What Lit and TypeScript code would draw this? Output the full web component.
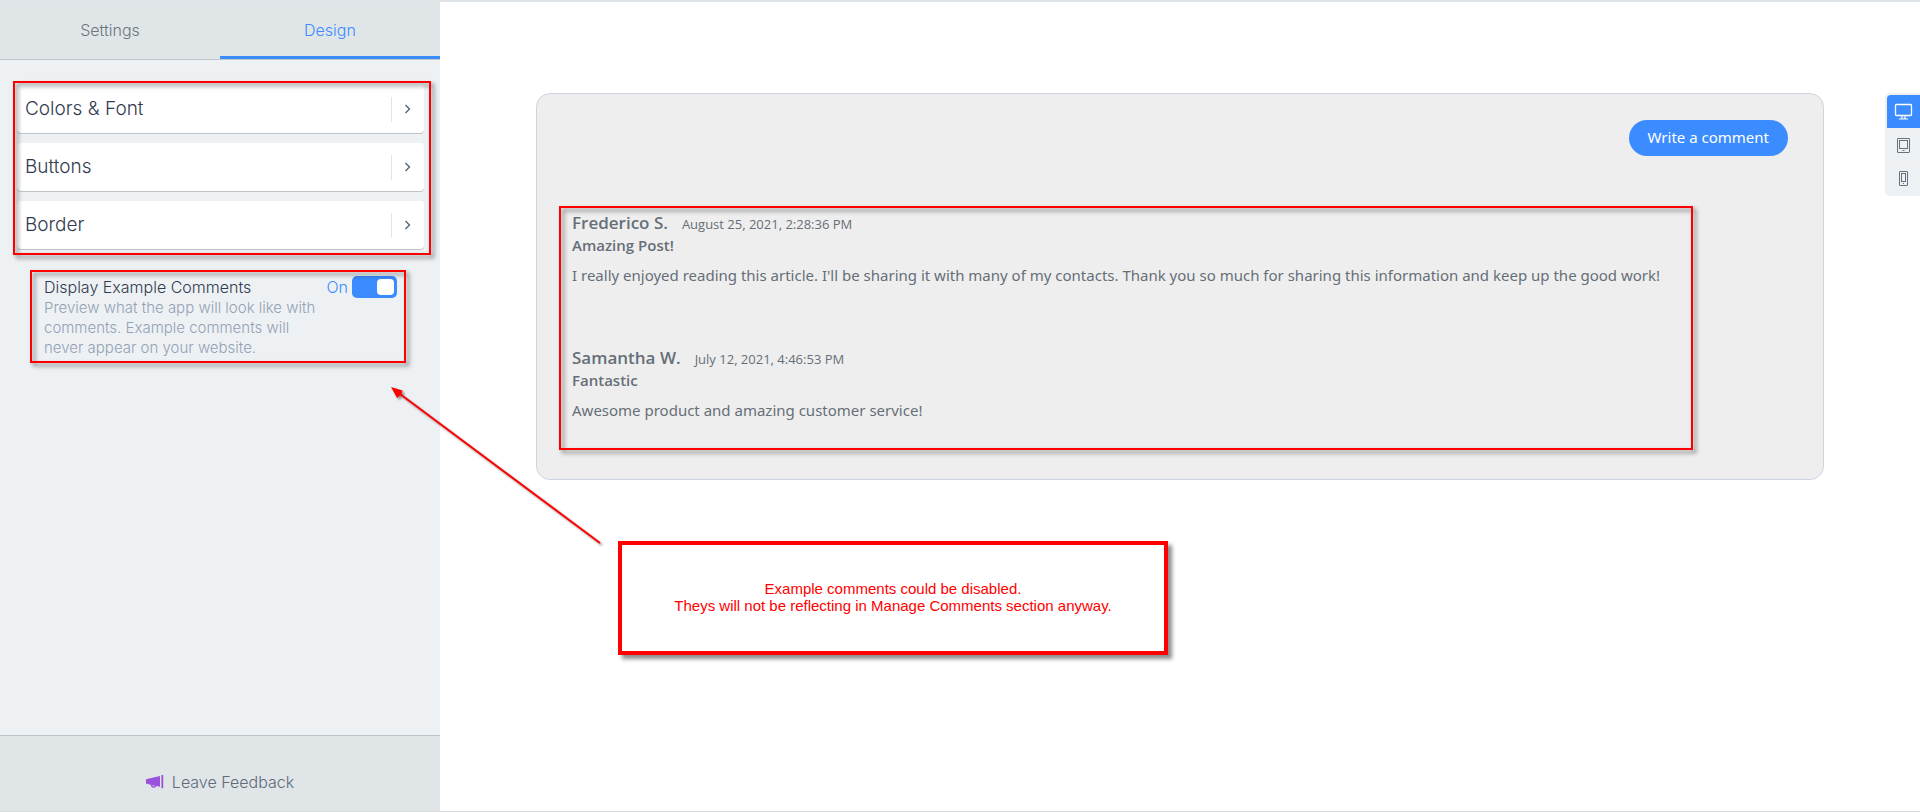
import { LitElement, html, css, svg } from "lit";
import { customElement, state } from "lit/decorators.js";

const chevron = html`<svg width="8" height="10" viewBox="0 0 8 10" fill="none" stroke="#4c6178" stroke-width="1.3" aria-hidden="true"><path d="M1.500 1l4 4-4 4" /></svg>`;

const megaphone = html`<svg width="18" height="14" viewBox="0 0 18 14" fill="#9a52dd" aria-hidden="true">
  <path d="M0 4.2L14 1v10.8L10.6 11a3.1 3.1 0 0 1-5.9-1.3L0 8.6z" />
  <path d="M6.3 10.1l2.6.6a1.4 1.4 0 0 1-2.6-.6z" fill="#e0e5e8" />
  <path d="M15.4 0H17.2v13.2h-1.800z" />
</svg>`;

const deviceIcons = {
  Desktop: svg`<rect x="1.500" y="1.500" width="16" height="11" rx="1" stroke-width="1.300"/><path d="M8 13v2.500M11 13v2.500M5 16h9" stroke-width="1.200"/>`,
  Tablet: svg`<rect x="3.500" y="2.500" width="12" height="14" rx=".5"/><rect x="5.500" y="4.500" width="8" height="8"/><path d="M8.500 14.500h2"/>`,
  Mobile: svg`<rect x="5.500" y="2.500" width="8" height="14" rx=".5"/><rect x="7.500" y="4.500" width="4" height="8"/><path d="M9 14.500h1"/>`,
};
type Device = keyof typeof deviceIcons;

const comments = [
  {
    author: "Frederico S.",
    date: "August 25, 2021, 2:28:36 PM",
    title: "Amazing Post!",
    text: "I really enjoyed reading this article. I'll be sharing it with many of my contacts. Thank you so much for sharing this information and keep up the good work!",
  },
  {
    author: "Samantha W.",
    date: "July 12, 2021, 4:46:53 PM",
    title: "Fantastic",
    text: "Awesome product and amazing customer service!",
  },
];

@customElement("app-root")
export class AppRoot extends LitElement {
  @state() private device: Device = "Desktop";
  @state() private examples = true;

  static styles = css`
    :host {
      display: flex;
      position: relative;
      box-sizing: border-box;
      min-height: 100vh;
      border-top: 2px solid #dfe5e9;
      border-bottom: 1px solid #dadddf;
      background: #fff;
      font-family: Inter, "Liberation Sans", sans-serif;
      font-weight: 300;
      font-size: 16px;
    }
    * {
      box-sizing: border-box;
    }
    button {
      font: inherit;
      border: 0;
      padding: 0;
      background: none;
      cursor: pointer;
    }
    p, h3, h4, ul {
      margin: 0;
      padding: 0;
    }
    .sidebar {
      flex: none;
      width: 440px;
      display: flex;
      flex-direction: column;
      background: #edf1f4;
    }
    .tabs {
      display: grid;
      grid-template-columns: 1fr 1fr;
      height: 58px;
      background: #e0e5e8;
      border-bottom: 1px solid #bfc5c9;
    }
    .tab {
      padding-top: 2px;
      color: #6c7680;
      border-bottom: 3px solid transparent;
    }
    .tab.active {
      color: #3b8cff;
      border-color: #3b8cff;
    }
    .marked {
      position: relative;
    }
    .marked::after {
      content: "";
      position: absolute;
      inset: 0;
      border: 2px solid #f00;
      filter: drop-shadow(3px 3px 2px rgba(0, 0, 0, 0.5));
      pointer-events: none;
    }
    .sections {
      display: flex;
      flex-direction: column;
      gap: 10px;
      margin: 21px 9px 0 13px;
      padding: 4px 7px 6px 4px;
    }
    .section {
      display: flex;
      align-items: center;
      height: 48px;
      padding-left: 8px;
      border-radius: 4px;
      background: #fff;
      box-shadow: 0 1px 0 #bcc4c8;
      color: #323a50;
      font-size: 19px;
      text-align: left;
    }
    .section-name {
      flex: 1;
      padding-bottom: 2px;
    }
    .section-go {
      display: flex;
      align-items: center;
      justify-content: center;
      width: 33px;
      height: 25px;
      border-left: 1px solid #dfe5eb;
    }
    .example {
      display: grid;
      grid-template-columns: 1fr auto;
      margin: 15px 34px 0 30px;
      padding: 6px 9px 5px 14px;
      color: #323a50;
      line-height: 22px;
    }
    .example-text {
      width: 272px;
      color: #94a1b5;
      font-size: 15px;
      line-height: 20px;
    }
    .toggle {
      display: flex;
      gap: 4px;
      color: #3b8cff;
    }
    .switch {
      appearance: none;
      display: flex;
      width: 45px;
      height: 22px;
      margin: 0;
      padding: 3px;
      border-radius: 5px;
      background: #a8b4c0;
      cursor: pointer;
    }
    .switch::before {
      content: "";
      width: 17px;
      border-radius: 4px;
      background: #fff;
    }
    .switch:checked {
      justify-content: flex-end;
      background: #3b8cff;
    }
    .feedback {
      display: flex;
      align-items: center;
      justify-content: center;
      gap: 8px;
      height: 76px;
      margin-top: auto;
      padding-top: 17px;
      border-top: 1px solid #bcc3c7;
      background: #e0e5e8;
      color: #5f6b78;
      text-decoration: none;
    }
    .preview {
      flex: 1;
      padding: 91px 96px 0;
      font-family: "Open Sans", sans-serif;
      font-weight: 400;
      color: #666e78;
    }
    .widget {
      padding-bottom: 29px;
      border: 1px solid #cdd5e2;
      border-radius: 14px;
      background: #eee;
    }
    .widget-bar {
      display: flex;
      justify-content: flex-end;
      margin: 0 17px 0 8px;
      padding: 26px 18px 26px 0;
      border-bottom: 1px solid #eaeeef;
    }
    .write {
      height: 36px;
      padding: 0 19px 2px;
      border-radius: 18px;
      background: #3b8cff;
      color: #fff;
      font-family: "Noto Sans", "Open Sans", sans-serif;
      font-size: 15px;
    }
    .comments {
      display: grid;
      gap: 59px;
      width: fit-content;
      margin: 23px 22px 0;
      padding: 5px 33px 28px 13px;
      list-style: none;
    }
    .comment-head {
      display: flex;
      align-items: baseline;
      gap: 14px;
      height: 24px;
      line-height: 24px;
    }
    .author {
      font-size: 17px;
      font-weight: 600;
    }
    .date {
      font-size: 13px;
    }
    .title {
      font-size: 15px;
      font-weight: 600;
      line-height: 20px;
    }
    .text {
      padding-top: 8px;
      font-family: "Noto Sans", "Open Sans", sans-serif;
      font-size: 15px;
      line-height: 24px;
    }
    .devices {
      position: absolute;
      top: 91px;
      right: 0;
      display: grid;
      padding: 2px 0 2px 2px;
      border-radius: 5px 0 0 5px;
      background: #edf1f4;
    }
    .device {
      display: grid;
      place-items: center;
      width: 33px;
      height: 33px;
      color: #68727c;
    }
    .device.active {
      border-radius: 4px 0 0 0;
      background: #3b8cff;
      color: #fff;
    }
    .note {
      position: absolute;
      left: 618px;
      top: 539px;
      display: grid;
      place-content: center;
      width: 550px;
      height: 114px;
      padding-bottom: 2px;
      border: 4px solid #f00;
      background: #fff;
      box-shadow: 4px 4px 4px rgba(0, 0, 0, 0.45);
      color: #f00;
      font-family: "Liberation Sans", Arial, sans-serif;
      font-size: 15px;
      font-weight: 400;
      line-height: 17px;
      text-align: center;
    }
    .arrow {
      position: absolute;
      left: 380px;
      top: 378px;
      filter: drop-shadow(2px 2px 1px rgba(0, 0, 0, 0.4));
      pointer-events: none;
    }
  `;

  render() {
    return html`
      <aside class="sidebar">
        <nav class="tabs">
          <button class="tab">Settings</button>
          <button class="tab active">Design</button>
        </nav>
        <div class="sections marked">
          ${["Colors & Font", "Buttons", "Border"].map(
            (name) => html`<button class="section">
              <span class="section-name">${name}</span>
              <span class="section-go">${chevron}</span>
            </button>`
          )}
        </div>
        <div class="example marked">
          <label for="examples">Display Example Comments</label>
          <div class="toggle">
            <span>${this.examples ? "On" : "Off"}</span>
            <input id="examples" class="switch" type="checkbox" role="switch" .checked=${this.examples}
              @change=${() => (this.examples = !this.examples)} />
          </div>
          <p class="example-text">Preview what the app will look like with comments. Example comments will never appear on your website.</p>
        </div>
        <a class="feedback" href="#feedback">${megaphone}<span>Leave Feedback</span></a>
      </aside>
      <main class="preview">
        <section class="widget">
          <div class="widget-bar"><button class="write">Write a comment</button></div>
          <ul class="comments marked">
            ${comments.map(
              (c) => html`<li>
                <div class="comment-head"><h3 class="author">${c.author}</h3><span class="date">${c.date}</span></div>
                <h4 class="title">${c.title}</h4>
                <p class="text">${c.text}</p>
              </li>`
            )}
          </ul>
        </section>
      </main>
      <div class="devices">
        ${(Object.keys(deviceIcons) as Device[]).map(
          (d) => html`<button class="device ${d === this.device ? "active" : ""}" aria-label=${d} @click=${() => (this.device = d)}>
            <svg width="19" height="17" viewBox="0 0 19 17" fill="none" stroke="currentColor">${deviceIcons[d]}</svg>
          </button>`
        )}
      </div>
      <svg class="arrow" width="230" height="170" viewBox="0 0 230 170" aria-hidden="true">
        <path d="M16 11L220 163" stroke="#f00" stroke-width="2" />
        <path d="M11 7l11.500 3.500-1 3.500-4.500 4z" fill="#f00" />
      </svg>
      <div class="note">
        <p>Example comments could be disabled.</p>
        <p>Theys will not be reflecting in Manage Comments section anyway.</p>
      </div>
    `;
  }
}
